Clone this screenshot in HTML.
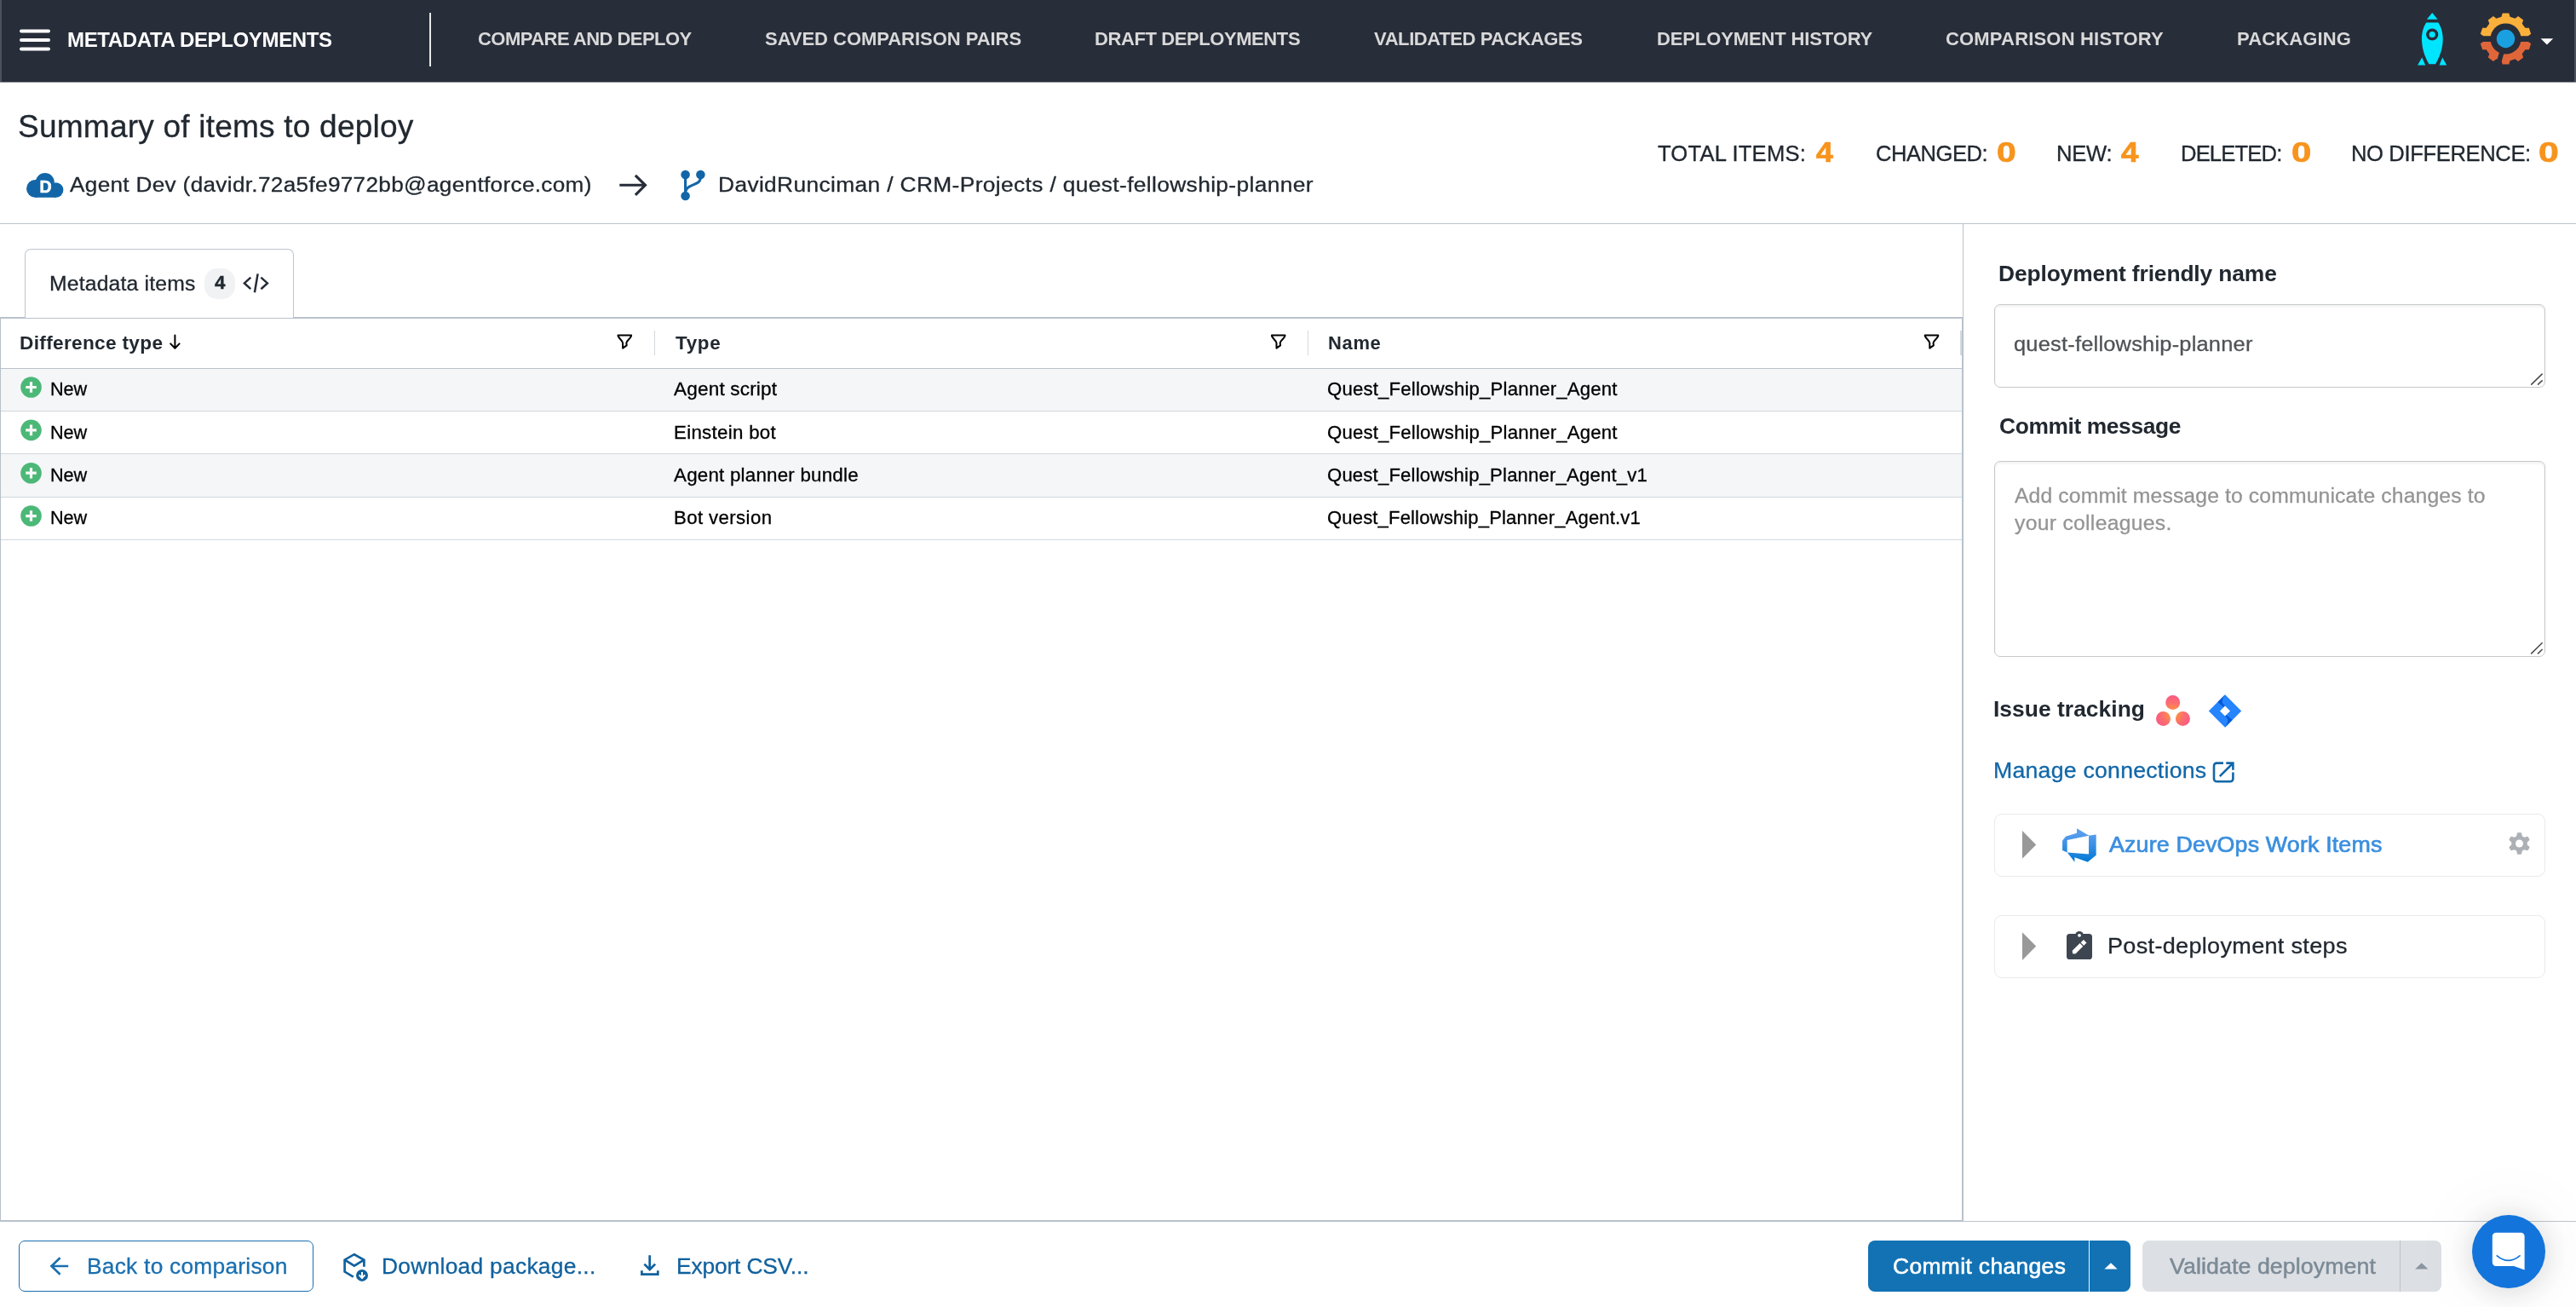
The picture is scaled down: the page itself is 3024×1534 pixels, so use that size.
<!DOCTYPE html>
<html lang="en">
<head>
<meta charset="utf-8">
<title>Summary of items to deploy</title>
<style>
html,body{margin:0;padding:0}
body{width:3024px;height:1534px;overflow:hidden;background:#fff;position:relative;font-family:"Liberation Sans",sans-serif;color:#212830}
.t{position:absolute;white-space:pre;margin:0;padding:0;will-change:transform}
.abs{position:absolute}
svg{position:absolute;overflow:visible}
nav{position:absolute;left:0;top:0;width:3024px;height:96px;background:#282d3a;border-bottom:1px solid #8e9199}
.edge{position:absolute;top:0;width:2px;height:96px;background:#4d515d}
.hr{position:absolute;left:0;height:1px;background:#bcc5cd}
.tabbox{position:absolute;left:29px;top:292px;width:314px;height:80px;border:1px solid #bcc5cd;border-bottom:none;border-radius:7px 7px 0 0;background:#fff;box-sizing:content-box}
.badge{position:absolute;left:240px;top:315px;width:36px;height:36px;border-radius:15px;background:#f0f2f4}
.grid{position:absolute;left:0;top:372px;width:2304px;height:1062px;border:1px solid #b7c0c9;border-top:2px solid #b9c2cb;border-bottom:2px solid #b9c1c9;border-right:none;box-sizing:border-box;background:#fff}
.row{position:absolute;left:1px;width:2302px;box-sizing:border-box;border-bottom:1px solid #d3d8dd}
.row.odd{background:#f5f6f8}
.colsep{position:absolute;top:388px;width:1px;height:29px;background:#d5d9dd}
.vdiv{position:absolute;left:2303px;top:373px;width:2px;height:1061px;background:#b9c2cc}
.vdiv0{position:absolute;left:2304px;top:263px;width:1px;height:110px;background:#b9c2cc}
.field{position:absolute;left:2341px;width:647px;border:1px solid #c6c8cb;border-radius:7px;box-sizing:border-box;background:#fff;box-shadow:inset 0 2px 3px rgba(0,0,0,.06)}
.card{position:absolute;left:2341px;width:647px;height:74px;border:1px solid #eaeaec;border-radius:9px;box-sizing:border-box;background:#fff}
.btn{position:absolute;top:1456px;height:60px;border-radius:8px;box-sizing:border-box}
</style>
</head>
<body>

<!-- ===== top navigation ===== -->
<nav>
  <div class="edge" style="left:0"></div>
  <div class="edge" style="right:0"></div>
  <svg style="left:20px;top:30px" width="44" height="34" viewBox="20 30 44 34" ><path d="M25 36.4H57M25 46.9H57M25 57.4H57" stroke="#fff" stroke-width="4" stroke-linecap="round" fill="none"/></svg>
  <span class="t" id="nav0" style="left:79.1px;top:34.7px;font-size:24px;line-height:24px;letter-spacing:-0.35px;color:#ffffff;font-weight:700">METADATA DEPLOYMENTS</span>
  <div class="abs" style="left:504px;top:15px;width:2px;height:63px;background:#e8e8e9"></div>
  <span class="t" id="nav1" style="left:560.6px;top:34.8px;font-size:22px;line-height:22px;letter-spacing:-0.54px;color:#d9d9d9;font-weight:700">COMPARE AND DEPLOY</span>
<span class="t" id="nav2" style="left:898.0px;top:34.8px;font-size:22px;line-height:22px;letter-spacing:-0.04px;color:#d9d9d9;font-weight:700">SAVED COMPARISON PAIRS</span>
<span class="t" id="nav3" style="left:1284.8px;top:34.8px;font-size:22px;line-height:22px;letter-spacing:-0.41px;color:#d9d9d9;font-weight:700">DRAFT DEPLOYMENTS</span>
<span class="t" id="nav4" style="left:1612.9px;top:34.8px;font-size:22px;line-height:22px;letter-spacing:-0.41px;color:#d9d9d9;font-weight:700">VALIDATED PACKAGES</span>
<span class="t" id="nav5" style="left:1944.6px;top:34.8px;font-size:22px;line-height:22px;letter-spacing:-0.13px;color:#d9d9d9;font-weight:700">DEPLOYMENT HISTORY</span>
<span class="t" id="nav6" style="left:2283.5px;top:34.8px;font-size:22px;line-height:22px;letter-spacing:0.18px;color:#d9d9d9;font-weight:700">COMPARISON HISTORY</span>
<span class="t" id="nav7" style="left:2625.8px;top:34.8px;font-size:22px;line-height:22px;letter-spacing:0.12px;color:#d9d9d9;font-weight:700">PACKAGING</span>
  <svg style="left:2834px;top:12px" width="44" height="68" viewBox="2834 12 44 68" ><g fill="#00e5ff"><path d="M2855.2 15L2861.6 22.8H2848.8Z"/><path d="M2848.2 26.5H2862.3C2866.6 33 2868 41 2867.7 48C2867 60 2862.5 69.5 2859 75.3H2851.5C2848 69.5 2843.6 60 2843 48C2842.6 41 2844 33 2848.2 26.5Z"/><path d="M2838 76.4L2843.2 67.6L2847.2 76.4Z"/><path d="M2863.6 76.4L2867.2 67.4L2872.2 76.4Z"/></g><circle cx="2855.2" cy="40.5" r="7.1" fill="#282d3a"/><circle cx="2855.2" cy="40.5" r="3.6" fill="#00e5ff"/></svg>
  <svg style="left:2908px;top:12px" width="96" height="68" viewBox="2908 12 96 68" ><defs><clipPath id="gtop"><rect x="2905" y="10" width="75" height="32.3"/></clipPath><clipPath id="gbot"><rect x="2905" y="49" width="75" height="32"/></clipPath></defs><path d="M2936.43 19.80 L2937.71 15.54 L2945.29 15.54 L2946.57 19.80 L2952.51 21.72 L2956.05 19.04 L2962.17 23.49 L2960.71 27.69 L2964.38 32.73 L2968.83 32.64 L2971.17 39.84 L2967.51 42.38 L2967.51 48.62 L2971.17 51.16 L2968.83 58.36 L2964.38 58.27 L2960.71 63.31 L2962.17 67.51 L2956.05 71.96 L2952.51 69.28 L2946.57 71.20 L2945.29 75.46 L2937.71 75.46 L2936.43 71.20 L2930.49 69.28 L2926.95 71.96 L2920.83 67.51 L2922.29 63.31 L2918.62 58.27 L2914.17 58.36 L2911.83 51.16 L2915.49 48.62 L2915.49 42.38 L2911.83 39.84 L2914.17 32.64 L2918.62 32.73 L2922.29 27.69 L2920.83 23.49 L2926.95 19.04 L2930.49 21.72Z" fill="#fbb03b" clip-path="url(#gtop)"/><path d="M2936.43 19.80 L2937.71 15.54 L2945.29 15.54 L2946.57 19.80 L2952.51 21.72 L2956.05 19.04 L2962.17 23.49 L2960.71 27.69 L2964.38 32.73 L2968.83 32.64 L2971.17 39.84 L2967.51 42.38 L2967.51 48.62 L2971.17 51.16 L2968.83 58.36 L2964.38 58.27 L2960.71 63.31 L2962.17 67.51 L2956.05 71.96 L2952.51 69.28 L2946.57 71.20 L2945.29 75.46 L2937.71 75.46 L2936.43 71.20 L2930.49 69.28 L2926.95 71.96 L2920.83 67.51 L2922.29 63.31 L2918.62 58.27 L2914.17 58.36 L2911.83 51.16 L2915.49 48.62 L2915.49 42.38 L2911.83 39.84 L2914.17 32.64 L2918.62 32.73 L2922.29 27.69 L2920.83 23.49 L2926.95 19.04 L2930.49 21.72Z" fill="#e0663a" clip-path="url(#gbot)"/><circle cx="2941.5" cy="45.5" r="18" fill="#282d3a"/><path d="M2941.5 45.5L2932.3 77" stroke="#282d3a" stroke-width="5.6"/><circle cx="2941.5" cy="45.5" r="10.7" fill="#1a9fe0"/><path d="M2982.6 45.2H2997.2L2989.9 52.4Z" fill="#fff"/></svg>
</nav>

<!-- ===== page header ===== -->
<header>
  <span class="t" id="h1" style="left:21.2px;top:129.9px;font-size:37.08px;line-height:37.08px;letter-spacing:0.19px;color:#212830;-webkit-text-stroke:0.3px #212830">Summary of items to deploy</span>
  <svg style="left:28px;top:200px;will-change:transform" width="50" height="36" viewBox="28 200 50 36" ><g fill="#1266a8"><circle cx="41.4" cy="221.4" r="10.4"/><circle cx="52.8" cy="214" r="11"/><circle cx="65.6" cy="223" r="8.8"/><rect x="41" y="216" width="25" height="15.8"/></g><text x="46.4" y="226.4" font-family="Liberation Sans, sans-serif" font-weight="700" font-size="19.6" fill="#fff" stroke="#fff" stroke-width="0.55">D</text></svg>
  <span class="t" id="src" style="left:82.2px;top:204.9px;font-size:24.72px;line-height:24.72px;letter-spacing:0.32px;color:#212830;-webkit-text-stroke:0.3px #212830;transform:scaleX(1.0567);transform-origin:0 0">Agent Dev (davidr.72a5fe9772bb@agentforce.com)</span>
  <svg style="left:724px;top:202px" width="40" height="32" viewBox="724 202 40 32" ><path d="M727.3 217.3H757M745.9 205.9L757.5 217.3L745.9 228.8" stroke="#262c38" stroke-width="3.1" fill="none" stroke-linejoin="miter"/></svg>
  <svg style="left:796px;top:196px" width="36" height="42" viewBox="796 196 36 42" ><g fill="#1266a8"><circle cx="804.6" cy="205" r="5.3"/><circle cx="822.4" cy="205" r="5.3"/><circle cx="804.6" cy="230" r="5.3"/></g><path d="M804.6 205V230M822.4 205V208C822.4 214.2 817.4 215.6 812.2 217.6C808 219.2 804.6 221.4 804.6 226.5" stroke="#1266a8" stroke-width="3.1" fill="none"/></svg>
  <span class="t" id="dst" style="left:843.0px;top:204.9px;font-size:24.72px;line-height:24.72px;letter-spacing:0.34px;color:#212830;-webkit-text-stroke:0.3px #212830;transform:scaleX(1.0651);transform-origin:0 0">DavidRunciman / CRM-Projects / quest-fellowship-planner</span>
  <span class="t" id="st1" style="left:1946.0px;top:168.3px;font-size:25.6px;line-height:25.6px;letter-spacing:0.20px;color:#212830;-webkit-text-stroke:0.3px #212830">TOTAL ITEMS:</span>
<span class="t" id="sv1" style="left:2132.0px;top:161.2px;font-size:34px;line-height:34px;letter-spacing:-0.72px;color:#f7941d;font-weight:700;-webkit-text-stroke:0.7px #f7941d;transform:scaleX(1.056);transform-origin:0 0">4</span>
<span class="t" id="st2" style="left:2201.5px;top:168.3px;font-size:25.6px;line-height:25.6px;letter-spacing:-0.50px;color:#212830;-webkit-text-stroke:0.3px #212830">CHANGED:</span>
<span class="t" id="sv2" style="left:2344.0px;top:161.2px;font-size:34px;line-height:34px;letter-spacing:-0.02px;color:#f7941d;font-weight:700;-webkit-text-stroke:0.7px #f7941d;transform:scaleX(1.203);transform-origin:0 0">0</span>
<span class="t" id="st3" style="left:2413.8px;top:168.3px;font-size:25.6px;line-height:25.6px;letter-spacing:-0.25px;color:#212830;-webkit-text-stroke:0.3px #212830">NEW:</span>
<span class="t" id="sv3" style="left:2490.0px;top:161.2px;font-size:34px;line-height:34px;letter-spacing:0.08px;color:#f7941d;font-weight:700;-webkit-text-stroke:0.7px #f7941d;transform:scaleX(1.082);transform-origin:0 0">4</span>
<span class="t" id="st4" style="left:2560.1px;top:168.3px;font-size:25.6px;line-height:25.6px;letter-spacing:-0.84px;color:#212830;-webkit-text-stroke:0.3px #212830">DELETED:</span>
<span class="t" id="sv4" style="left:2689.5px;top:161.2px;font-size:34px;line-height:34px;letter-spacing:0.18px;color:#f7941d;font-weight:700;-webkit-text-stroke:0.7px #f7941d;transform:scaleX(1.232);transform-origin:0 0">0</span>
<span class="t" id="st5" style="left:2760.1px;top:168.3px;font-size:25.6px;line-height:25.6px;letter-spacing:-0.38px;color:#212830;-webkit-text-stroke:0.3px #212830">NO DIFFERENCE:</span>
<span class="t" id="sv5" style="left:2980.2px;top:161.2px;font-size:34px;line-height:34px;letter-spacing:0.38px;color:#f7941d;font-weight:700;-webkit-text-stroke:0.7px #f7941d;transform:scaleX(1.258);transform-origin:0 0">0</span>
</header>
<div class="hr" style="top:262px;width:3024px"></div>

<!-- ===== metadata grid ===== -->
<main>
  <div class="grid"></div>
  <div class="tabbox"></div>
  <div class="badge"></div>
  <span class="t" id="tab" style="left:58.0px;top:320.5px;font-size:24.72px;line-height:24.72px;letter-spacing:0.18px;color:#212830;-webkit-text-stroke:0.3px #212830">Metadata items</span>
<span class="t" id="badge" style="left:252.0px;top:321.4px;font-size:22px;line-height:22px;letter-spacing:0.05px;color:#212830;font-weight:700;-webkit-text-stroke:0.4px #212830;transform:scaleX(1.013);transform-origin:0 0">4</span>
  <svg style="left:283px;top:318px" width="36" height="28" viewBox="283 318 36 28" ><path d="M294.3 325.6L286.9 332.4L294.3 339.2M302.6 321.4L298.9 343.2M306.4 325.6L313.9 332.4L306.4 339.2" stroke="#262c38" stroke-width="2.5" fill="none"/></svg>

  <div class="row" style="top:374px;height:59px;border-bottom:1px solid #bac2ca"></div>
  <span class="t" id="th1" style="left:23.3px;top:391.5px;font-size:21.63px;line-height:21.63px;letter-spacing:0.31px;color:#212830;font-weight:700;transform:scaleX(1.0460);transform-origin:0 0">Difference type</span>
  <svg style="left:197px;top:390px" width="18" height="22" viewBox="197 390 18 22" ><path d="M205.4 393.4V408.6M200.2 403.4L205.4 408.8L210.6 403.4" stroke="#000" stroke-width="2" fill="none" stroke-linecap="round" stroke-linejoin="round"/></svg>
  <svg style="left:720px;top:388px" width="1562" height="26" viewBox="720 388 1562 26" ><path d="M725.5 393.4H741.1C741.5 396.5 735.5 399.5 735.3 402.5L735.6999999999999 405.4L731.1 408.6V402.5C730.9 399.5 725.1 396.5 725.5 393.4Z" stroke="#000" stroke-width="2" fill="none" stroke-linejoin="round"/><path d="M1492.8999999999999 393.4H1508.5C1508.8999999999999 396.5 1502.8999999999999 399.5 1502.7 402.5L1503.1 405.4L1498.5 408.6V402.5C1498.3 399.5 1492.5 396.5 1492.8999999999999 393.4Z" stroke="#000" stroke-width="2" fill="none" stroke-linejoin="round"/><path d="M2259.7 393.4H2275.2999999999997C2275.7 396.5 2269.7 399.5 2269.5 402.5L2269.9 405.4L2265.2999999999997 408.6V402.5C2265.1 399.5 2259.2999999999997 396.5 2259.7 393.4Z" stroke="#000" stroke-width="2" fill="none" stroke-linejoin="round"/></svg>
  <div class="colsep" style="left:768px"></div>
  <span class="t" id="th2" style="left:792.5px;top:391.5px;font-size:21.63px;line-height:21.63px;letter-spacing:0.66px;color:#212830;font-weight:700;transform:scaleX(1.0362);transform-origin:0 0">Type</span>
  <div class="colsep" style="left:1534.5px"></div>
  <span class="t" id="th3" style="left:1559.1px;top:391.5px;font-size:21.63px;line-height:21.63px;letter-spacing:0.67px;color:#212830;font-weight:700;transform:scaleX(1.0142);transform-origin:0 0">Name</span>
  <div class="colsep" style="left:2301px;width:2px"></div>

  <div class="row odd" style="top:433px;height:50px"></div>
  <div class="row" style="top:483px;height:50px"></div>
  <div class="row odd" style="top:533px;height:51px"></div>
  <div class="row" style="top:584px;height:50px"></div>
  <svg style="left:22px;top:440px" width="30" height="180" viewBox="22 440 30 180" ><circle cx="36.5" cy="454.50" r="12.3" fill="#4cb877"/><path d="M30.2 454.50H42.8M36.5 448.20V460.80" stroke="#f7f9f8" stroke-width="3.2"/><circle cx="36.5" cy="504.85" r="12.3" fill="#4cb877"/><path d="M30.2 504.85H42.8M36.5 498.55V511.15" stroke="#f7f9f8" stroke-width="3.2"/><circle cx="36.5" cy="555.20" r="12.3" fill="#4cb877"/><path d="M30.2 555.20H42.8M36.5 548.90V561.50" stroke="#f7f9f8" stroke-width="3.2"/><circle cx="36.5" cy="605.55" r="12.3" fill="#4cb877"/><path d="M30.2 605.55H42.8M36.5 599.25V611.85" stroke="#f7f9f8" stroke-width="3.2"/></svg>
  <span class="t" id="r0a" style="left:59.0px;top:446.3px;font-size:21.63px;line-height:21.63px;letter-spacing:-0.13px;color:#000000;-webkit-text-stroke:0.3px #000000">New</span>
<span class="t" id="r0b" style="left:791.4px;top:446.3px;font-size:21.63px;line-height:21.63px;letter-spacing:0.15px;color:#000000;-webkit-text-stroke:0.3px #000000;transform:scaleX(1.0448);transform-origin:0 0">Agent script</span>
<span class="t" id="r0c" style="left:1558.1px;top:446.3px;font-size:21.63px;line-height:21.63px;letter-spacing:0.17px;color:#000000;-webkit-text-stroke:0.3px #000000;transform:scaleX(1.0255);transform-origin:0 0">Quest_Fellowship_Planner_Agent</span>
<span class="t" id="r1a" style="left:59.0px;top:496.6px;font-size:21.63px;line-height:21.63px;letter-spacing:-0.13px;color:#000000;-webkit-text-stroke:0.3px #000000">New</span>
<span class="t" id="r1b" style="left:791.4px;top:496.6px;font-size:21.63px;line-height:21.63px;letter-spacing:0.28px;color:#000000;-webkit-text-stroke:0.3px #000000;transform:scaleX(1.0315);transform-origin:0 0">Einstein bot</span>
<span class="t" id="r1c" style="left:1558.1px;top:496.6px;font-size:21.63px;line-height:21.63px;letter-spacing:0.17px;color:#000000;-webkit-text-stroke:0.3px #000000;transform:scaleX(1.0255);transform-origin:0 0">Quest_Fellowship_Planner_Agent</span>
<span class="t" id="r2a" style="left:59.0px;top:547.0px;font-size:21.63px;line-height:21.63px;letter-spacing:-0.13px;color:#000000;-webkit-text-stroke:0.3px #000000">New</span>
<span class="t" id="r2b" style="left:791.4px;top:547.0px;font-size:21.63px;line-height:21.63px;letter-spacing:0.19px;color:#000000;-webkit-text-stroke:0.3px #000000;transform:scaleX(1.0354);transform-origin:0 0">Agent planner bundle</span>
<span class="t" id="r2c" style="left:1558.1px;top:547.0px;font-size:21.63px;line-height:21.63px;letter-spacing:0.17px;color:#000000;-webkit-text-stroke:0.3px #000000;transform:scaleX(1.0231);transform-origin:0 0">Quest_Fellowship_Planner_Agent_v1</span>
<span class="t" id="r3a" style="left:59.0px;top:597.3px;font-size:21.63px;line-height:21.63px;letter-spacing:-0.13px;color:#000000;-webkit-text-stroke:0.3px #000000">New</span>
<span class="t" id="r3b" style="left:791.4px;top:597.3px;font-size:21.63px;line-height:21.63px;letter-spacing:0.39px;color:#000000;-webkit-text-stroke:0.3px #000000;transform:scaleX(1.0260);transform-origin:0 0">Bot version</span>
<span class="t" id="r3c" style="left:1558.1px;top:597.3px;font-size:21.63px;line-height:21.63px;letter-spacing:0.16px;color:#000000;-webkit-text-stroke:0.3px #000000;transform:scaleX(1.0188);transform-origin:0 0">Quest_Fellowship_Planner_Agent.v1</span>
</main>
<div class="vdiv0"></div>
<div class="vdiv"></div>
<div class="hr" style="left:2305px;top:1433px;width:719px;height:1px;background:#bcc5cd"></div>

<!-- ===== side panel ===== -->
<aside>
  <span class="t" id="l1" style="left:2346.0px;top:308.1px;font-size:26.37px;line-height:26.37px;letter-spacing:-0.12px;color:#212830;font-weight:700">Deployment friendly name</span>
  <div class="field" style="top:357px;height:98px"></div>
  <span class="t" id="in1" style="left:2364.0px;top:391.7px;font-size:24.72px;line-height:24.72px;letter-spacing:0.21px;color:#4f5256;-webkit-text-stroke:0.3px #4f5256;transform:scaleX(1.0279);transform-origin:0 0">quest-fellowship-planner</span>
  <span class="t" id="l2" style="left:2347.0px;top:486.7px;font-size:26.37px;line-height:26.37px;letter-spacing:-0.38px;color:#212830;font-weight:700">Commit message</span>
  <div class="field" style="top:541px;height:230px"></div>
  <span class="t" id="ph1" style="left:2365.0px;top:569.5px;font-size:24.72px;line-height:24.72px;letter-spacing:0.13px;color:#949494;-webkit-text-stroke:0.3px #949494">Add commit message to communicate changes to</span>
<span class="t" id="ph2" style="left:2365.0px;top:602.3px;font-size:24.72px;line-height:24.72px;letter-spacing:0.29px;color:#949494;-webkit-text-stroke:0.3px #949494">your colleagues.</span>
  <svg style="left:2966px;top:434px" width="22" height="338" viewBox="2966 434 22 338" ><path d="M2971.2 451.6L2984.6 438.6M2979 451.6L2984.6 446.4M2971.2 767.4L2984.6 754.2M2979 767.4L2984.6 762" stroke="#4a4a4a" stroke-width="1.5" fill="none"/></svg>
  <span class="t" id="l3" style="left:2339.9px;top:819.0px;font-size:26.37px;line-height:26.37px;letter-spacing:0.05px;color:#212830;font-weight:700">Issue tracking</span>
  <svg style="left:2528px;top:814px" width="46" height="40" viewBox="2528 814 46 40" ><defs><radialGradient id="asg" gradientUnits="userSpaceOnUse" cx="2551" cy="837.5" r="24"><stop offset="0" stop-color="#ffa12e"/><stop offset="0.55" stop-color="#fb6d6f"/><stop offset="1" stop-color="#f9548a"/></radialGradient></defs><g fill="url(#asg)"><circle cx="2550.7" cy="824.5" r="8.5"/><circle cx="2539.5" cy="843.5" r="8.5"/><circle cx="2562.4" cy="843.5" r="8.5"/></g></svg>
  <svg style="left:2590px;top:813px" width="44" height="44" viewBox="2590 813 44 44" ><path d="M2612 815.3L2631.2 834.5L2612 853.7L2592.8 834.5Z" fill="#2684ff"/><path d="M2612 815.3L2603.4 823.9L2610.8 830.3L2612 828.5L2609.4 825.9C2608 823.5 2609 819.5 2612 815.3Z" fill="#0052cc" opacity=".85"/><path d="M2612 853.7L2620.6 845.1L2613.2 838.7L2612 840.5L2614.6 843.1C2616 845.5 2615 849.5 2612 853.7Z" fill="#0052cc" opacity=".85"/><path d="M2612 828.5L2618.0 834.5L2612 840.5L2606.0 834.5Z" fill="#fff"/></svg>
  <span class="t" id="mc" style="left:2339.9px;top:890.9px;font-size:26.37px;line-height:26.37px;letter-spacing:0.24px;color:#1267a8;-webkit-text-stroke:0.3px #1267a8;transform:scaleX(1.0113);transform-origin:0 0">Manage connections</span>
  <svg style="left:2595px;top:892px" width="30" height="29" viewBox="2595 892 30 29" ><path d="M2610 895.6H2602.2A3.2 3.2 0 0 0 2599 898.8V914A3.2 3.2 0 0 0 2602.2 917.2H2618.2A3.2 3.2 0 0 0 2621.4 914V906.4M2613.3 895.6H2621.4V903.8M2621 896L2605.8 911.2" stroke="#1267a8" stroke-width="2.6" fill="none"/></svg>
  <div class="card" style="top:955px"></div>
  <svg style="left:2370px;top:965px" width="610" height="52" viewBox="2370 965 610 52" ><path d="M2374 975.0V1007.8L2390.2 991.4Z" fill="#999"/><defs><linearGradient id="azg" x1="9" y1="16.97" x2="9" y2="1.03" gradientUnits="userSpaceOnUse"><stop offset="0" stop-color="#0078d4"/><stop offset=".16" stop-color="#1380da"/><stop offset=".53" stop-color="#3c91e5"/><stop offset=".82" stop-color="#559cec"/><stop offset="1" stop-color="#5ea0ef"/></linearGradient></defs><g transform="translate(2418.6 969.7) scale(2.475)"><path d="M17 4v9.74l-4 3.28-6.2-2.26V17l-3.51-4.59 10.23.8V4.44zm-3.41.49L7.85 1v2.29L2.58 4.84 1 6.87v4.61l2.26 1V6.57z" fill="url(#azg)"/></g><path d="M2954.69 981.66 L2955.58 977.85 L2959.42 977.85 L2960.31 981.66 L2963.32 983.40 L2967.06 982.26 L2968.98 985.59 L2966.13 988.26 L2966.13 991.74 L2968.98 994.41 L2967.06 997.74 L2963.32 996.60 L2960.31 998.34 L2959.42 1002.15 L2955.58 1002.15 L2954.69 998.34 L2951.68 996.60 L2947.94 997.74 L2946.02 994.41 L2948.87 991.74 L2948.87 988.26 L2946.02 985.59 L2947.94 982.26 L2951.68 983.40Z" fill="#adb1b6" stroke="#adb1b6" stroke-width="1.2" stroke-linejoin="round"/><circle cx="2957.5" cy="990" r="4.5" fill="#fff"/></svg>
  <span class="t" id="az" style="left:2476.4px;top:977.7px;font-size:26.37px;line-height:26.37px;letter-spacing:0.15px;color:#3b8fdf;-webkit-text-stroke:0.7px #3b8fdf;transform:scaleX(1.0175);transform-origin:0 0">Azure DevOps Work Items</span>
  <div class="card" style="top:1074px"></div>
  <svg style="left:2370px;top:1088px" width="92" height="42" viewBox="2370 1088 92 42" ><path d="M2374 1094.1999999999998V1127.0L2390.2 1110.6Z" fill="#999"/><rect x="2426" y="1096" width="30" height="30" rx="3.6" fill="#3d4650"/><circle cx="2441" cy="1097.6" r="4.7" fill="#3d4650"/><circle cx="2441" cy="1097.8" r="1.9" fill="#fff"/><g transform="translate(2433 1119.2) rotate(-44.5)"><path d="M0 0L2.2 -2.6H14.6V2.6H2.2Z" fill="#fff"/><rect x="16" y="-2.6" width="4.6" height="5.2" fill="#fff"/></g></svg>
  <span class="t" id="pd" style="left:2474.4px;top:1096.7px;font-size:26.37px;line-height:26.37px;letter-spacing:0.31px;color:#212830;-webkit-text-stroke:0.3px #212830;transform:scaleX(1.0258);transform-origin:0 0">Post-deployment steps</span>
</aside>

<!-- ===== footer actions ===== -->
<footer>
  <div class="btn" style="left:22px;width:346px;border:1px solid #1a6eb0;border-radius:7px;background:#fff"></div>
  <svg style="left:56px;top:1472px" width="28" height="28" viewBox="56 1472 28 28" ><path d="M60 1486H80.2M70.6 1476.2L60.4 1486L70.6 1495.8" stroke="#1a6fb0" stroke-width="2.6" fill="none"/></svg>
  <span class="t" id="b1" style="left:102.0px;top:1472.7px;font-size:26.37px;line-height:26.37px;letter-spacing:0.23px;color:#1a6fb0;-webkit-text-stroke:0.3px #1a6fb0">Back to comparison</span>
  <svg style="left:400px;top:1468px" width="36" height="38" viewBox="400 1468 36 38" ><path d="M427.4 1486.8V1478.7L415.9 1472.2L404.6 1478.7V1492.6L414.8 1498.6M404.6 1478.7L415.9 1485.6L427.4 1478.7" stroke="#10619e" stroke-width="2.7" fill="none" stroke-linejoin="miter"/><circle cx="425" cy="1496.9" r="7" fill="#10619e"/><path d="M425 1493V1499.4M421.6 1496.4L425 1500L428.4 1496.4" stroke="#fff" stroke-width="2" fill="none"/></svg>
  <span class="t" id="b2" style="left:448.0px;top:1472.7px;font-size:26.37px;line-height:26.37px;letter-spacing:0.28px;color:#10619e;-webkit-text-stroke:0.3px #10619e">Download package...</span>
  <svg style="left:749px;top:1470px" width="28" height="30" viewBox="749 1470 28 30" ><path d="M762.7 1473.3V1489.6M756.4 1483.6L762.7 1490L769.2 1483.6M753.4 1491.2V1495.6H772.3V1491.2" stroke="#10619e" stroke-width="2.7" fill="none"/></svg>
  <span class="t" id="b3" style="left:794.4px;top:1472.7px;font-size:26.37px;line-height:26.37px;letter-spacing:-0.15px;color:#10619e;-webkit-text-stroke:0.3px #10619e">Export CSV...</span>
  <div class="btn" style="left:2193px;width:308px;background:#1272b4"></div>
  <div class="abs" style="left:2452px;top:1456px;width:1px;height:60px;background:#f2f7fb"></div>
  <span class="t" id="b4" style="left:2222.0px;top:1472.5px;font-size:26.37px;line-height:26.37px;letter-spacing:0.39px;color:#ffffff;-webkit-text-stroke:0.6px #ffffff">Commit changes</span>
  <div class="btn" style="left:2515px;width:351px;background:#dcdfe3"></div>
  <div class="abs" style="left:2817px;top:1456px;width:1px;height:60px;background:#bfc4ca"></div>
  <span class="t" id="b5" style="left:2546.5px;top:1472.5px;font-size:26.37px;line-height:26.37px;letter-spacing:0.09px;color:#7b8a96;-webkit-text-stroke:0.5px #7b8a96;transform:scaleX(1.0145);transform-origin:0 0">Validate deployment</span>
  <svg style="left:2468px;top:1480px" width="386" height="12" viewBox="2468 1480 386 12" ><path d="M2470.4 1489.5L2478 1482.2L2485.6 1489.5Z" fill="#fff"/><path d="M2835.2 1489.5L2842.8 1482.2L2850.4 1489.5Z" fill="#8995a0"/></svg>
  <div class="abs" style="left:2902px;top:1426px;width:86px;height:86px;border-radius:50%;background:#1374dc;box-shadow:0 3px 36px rgba(0,0,0,.15),0 0 90px rgba(0,0,0,.07)"></div><svg style="left:2922px;top:1444px" width="46" height="50" viewBox="2922 1444 46 50" ><path d="M2930 1446.8H2959.4A4.2 4.2 0 0 1 2963.6 1451V1490.4L2951.2 1485.9H2930A4.2 4.2 0 0 1 2925.8 1481.7V1451A4.2 4.2 0 0 1 2930 1446.8Z" fill="#fff"/><path d="M2931.2 1473.8Q2944.6 1485 2958 1473.8" stroke="#1374dc" stroke-width="1.7" fill="none" stroke-linecap="round"/></svg>
</footer>

</body>
</html>
